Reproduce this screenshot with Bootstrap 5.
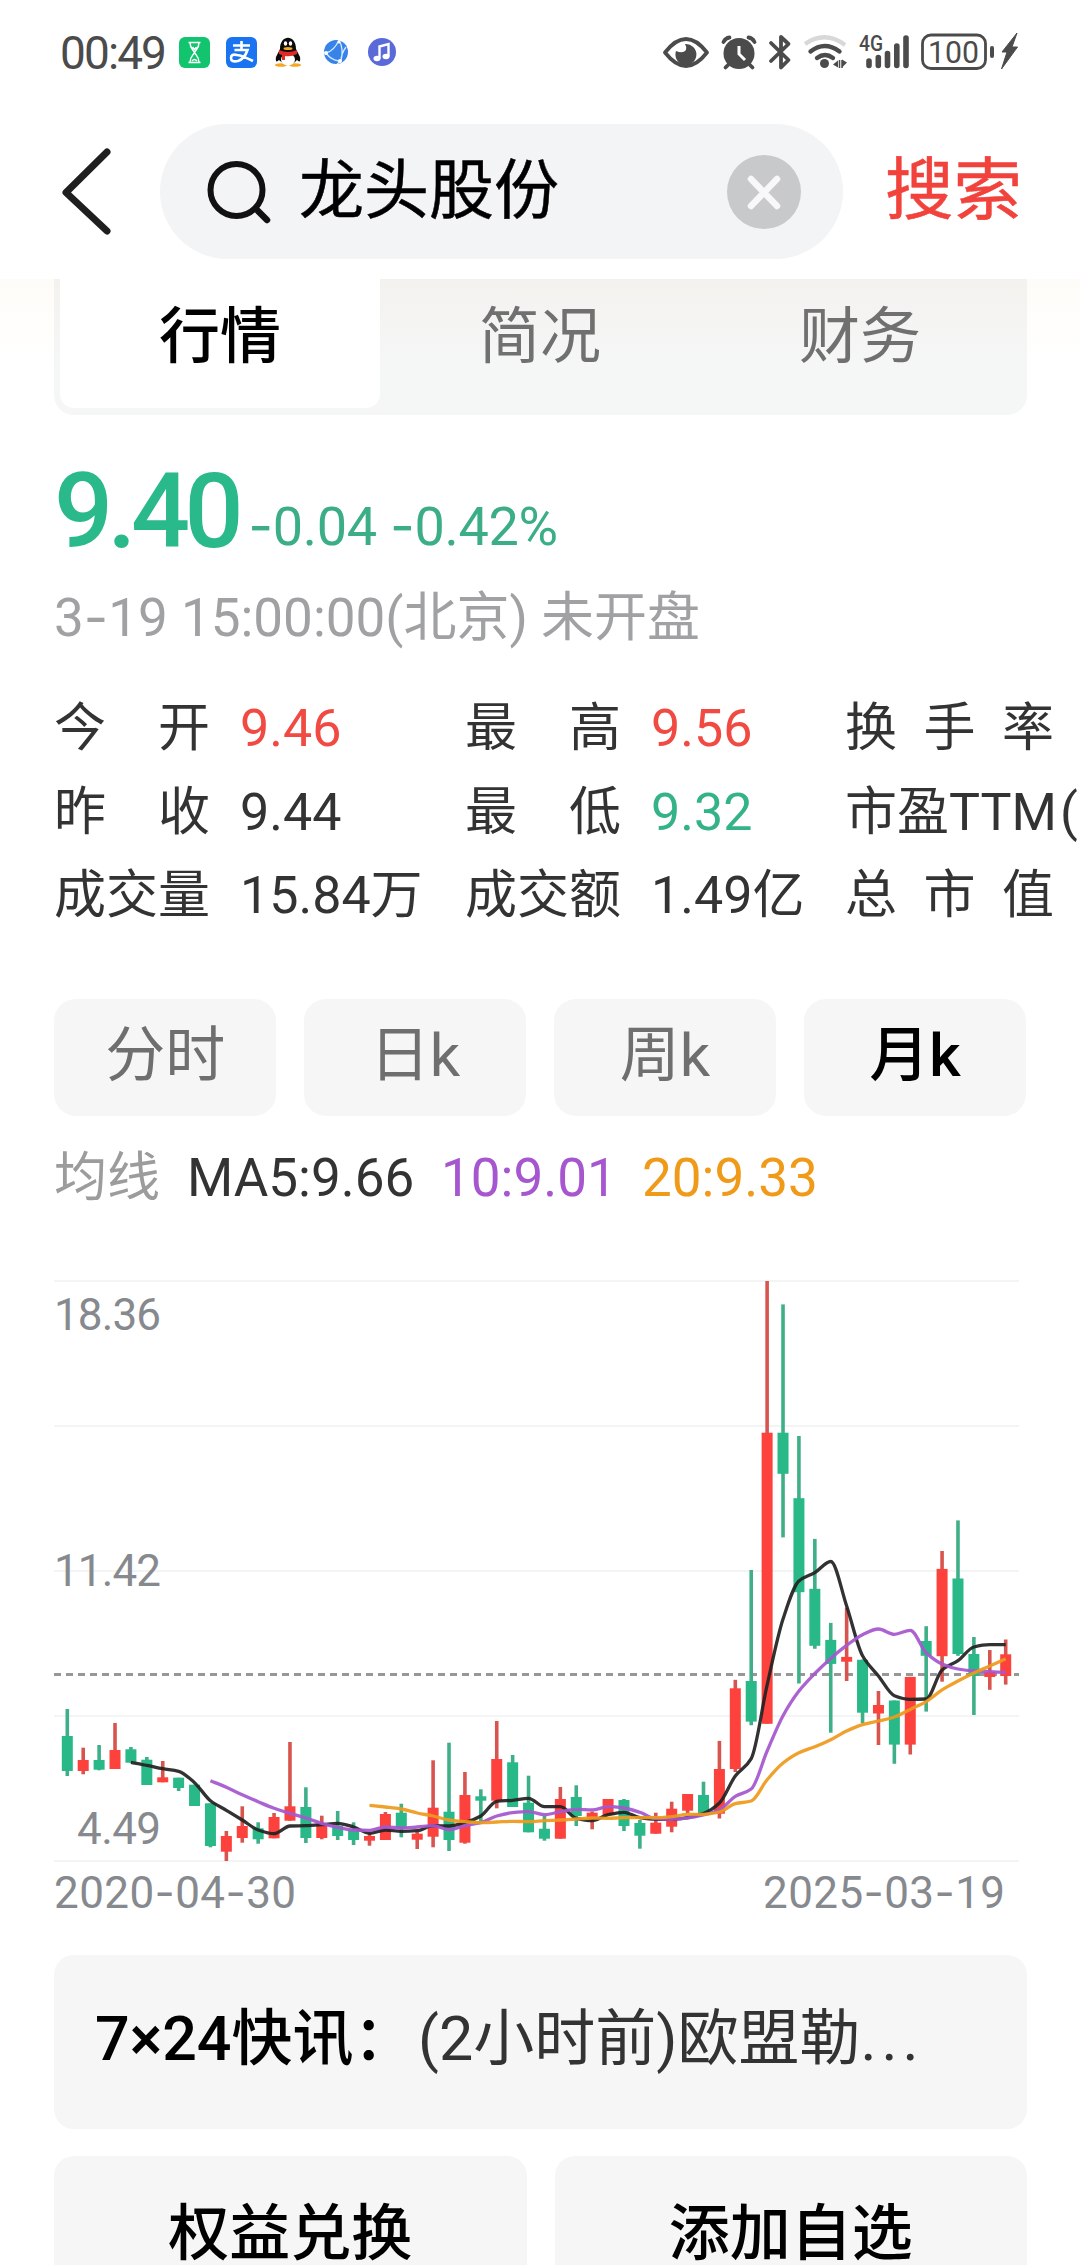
<!DOCTYPE html>
<html lang="zh-CN">
<head>
<meta charset="utf-8">
<meta name="viewport" content="width=device-width, initial-scale=1">
<title>龙头股份 行情</title>
<link href="https://cdn.jsdelivr.net/npm/bootstrap@5.3.0/dist/css/bootstrap.min.css" rel="stylesheet">
<style>
  body{font-family:Roboto,"Noto Sans CJK SC",sans-serif;width:1080px;height:2265px;overflow:hidden;background:#fff;color:#333;line-height:1}
  svg{display:block;flex:none}
  .statusbar{height:104px;padding:0 60px;color:#4b4b4b}
  .clock{font-size:46px;letter-spacing:-1.9px;width:107px;white-space:nowrap;padding-top:2px}
  .topbar{height:175px;padding:20px 0 0 62px}
  .searchbox{width:683px;height:135px;background:#f3f4f6;padding:0 42px 0 46px;margin-left:48px}
  .query{font-size:65px;color:#000;margin-left:28px;-webkit-text-stroke:.5px #000}
  .go{font-size:68.5px;color:#f2423c;margin-left:42px;white-space:nowrap;-webkit-text-stroke:.5px #f2423c}
  .tabzone{height:136px;padding:0 53px 0 54px;background:linear-gradient(#fefcf8,#fff 85px)}
  .tabset{height:136px;background:linear-gradient(#f4f2ef,#f5f6f6 80px);border-radius:0 0 20px 20px;padding:0 0 7px 6px;font-size:61px;color:#707070}
  .tabset>div{width:320px;padding-bottom:13px}
  .tabset .now{background:#fff;color:#000;font-weight:500;border-radius:0 0 14px 14px}
  .hy{font-family:Inter,sans-serif}
  .price{height:159px;padding:45px 54px 0;color:#2ab98a}
  .price b{font-size:104px;font-weight:500;letter-spacing:-5.5px;line-height:1}
  .price .chg{font-size:54px;letter-spacing:-.3px;color:#3bae87;margin-left:10px;position:relative;top:-2px}
  .stamp{height:94px;padding:17px 54px 0;font-size:53px;color:#9fa1a3;white-space:nowrap}
  .stats{padding:19px 0 0 54px;height:307px;font-size:52px;overflow:hidden}
  .stats>div{height:83.5px;line-height:83.5px;white-space:nowrap}
  .lab{width:156px;text-align:justify;text-align-last:justify;flex:none}
  .lab3{width:209px;text-align:justify;text-align-last:justify;flex:none;margin-right:6px}
  .v1{width:255px;padding-left:30px;flex:none}
  .v2{width:224px;padding-left:30px;flex:none}
  .up{color:#f04a43}.down{color:#35b388}
  .periods{padding:24px 54px 0;gap:27.6px}
  .periods .btn{height:117px;border-radius:22px;background:#f6f6f7;border:0;font-size:60px;line-height:1;color:#6f6f6f;padding:0 0 4px}
  .periods .btn.on{color:#000;font-weight:500}
  .malegend{height:114px;font-size:53px;padding:36px 0 0 54px;white-space:nowrap}
  .malegend span{flex:none}
  .news{height:174px;margin:0 53px 27px 54px;border-radius:20px;background:#f6f6f7;padding:0 40px 5px 41px;font-size:61px;color:#333;white-space:nowrap}
  .news strong{font-weight:500;color:#000;width:323px}
  .dots{letter-spacing:5px}
  .acts{gap:28px;padding:0 53px 0 54px}
  .acts>div{height:160px;border-radius:20px;background:#f6f6f7;font-size:61px;font-weight:500;color:#000;padding-bottom:4px}
</style>
</head>
<body>
<header>
  <div class="statusbar d-flex align-items-center">
    <span class="clock">00:49</span>
    <svg width="240" height="44" viewBox="167 30 240 44" style="margin-right:249px">
      <rect x="179" y="37" width="31" height="31" rx="6" fill="#12c46e"/>
      <path d="M188.500 42.500h12M188.500 62.500h12M190 42.500c0 6 3 7 4.500 10-1.500 3-4.500 4-4.500 10M199 42.500c0 6-3 7-4.500 10 1.500 3 4.500 4 4.500 10M192 61q2.500-3 5 0M192.500 47l2 2.500 2-2.500" fill="none" stroke="#fff" stroke-width="1.500"/>
      <rect x="226" y="37" width="31" height="31" rx="6" fill="#1a74f2"/>
      <path d="M233 45.500h17M241.500 41v9M234.500 50h13q-3 9-9.500 11-7 1.500-7-3t6-3q5 .5 16 6" fill="none" stroke="#fff" stroke-width="2.600"/>
      <ellipse cx="281" cy="65" rx="6" ry="1.800" fill="#f5a623"/><ellipse cx="295" cy="65" rx="6" ry="1.800" fill="#f5a623"/>
      <path d="M280 49c0-15 16-15 16 0l4 8q1 7-3 3-8 9-18 0-4 4-3-3z" fill="#0b0b0b"/>
      <ellipse cx="288" cy="59.500" rx="7" ry="6" fill="#fff"/>
      <path d="M279 50q9 4 18 0v4q-6 3-12 2v4h-3v-5l-3-1z" fill="#e02a25"/>
      <ellipse cx="285.500" cy="43.500" rx="1.700" ry="2.300" fill="#fff"/><ellipse cx="290.500" cy="43.500" rx="1.700" ry="2.300" fill="#fff"/>
      <ellipse cx="288" cy="48.500" rx="4.500" ry="1.500" fill="#f5a623"/>
      <circle cx="336" cy="52" r="12" fill="#3783ea"/>
      <path d="M326 53q8-2 13-13M326 53q5 7 13 8M339 40q5 9 2 21l-4 3M346 47q-5 7-5 14" fill="none" stroke="#d6e8ff" stroke-width="1.300"/>
      <circle cx="326" cy="53" r="2" fill="#fff"/><circle cx="340" cy="61" r="2" fill="#fff"/><circle cx="339" cy="42" r="1.500" fill="#fff"/>
      <circle cx="382" cy="52" r="14" fill="#5a6ad8"/>
      <path d="M379.500 58.500V46.500l9-2.500v12.500" fill="none" stroke="#fff" stroke-width="2.400"/>
      <ellipse cx="377" cy="58.500" rx="3.500" ry="2.800" fill="#fff"/><ellipse cx="386" cy="56.500" rx="3.500" ry="2.800" fill="#fff"/>
    </svg>
    <svg width="364" height="44" viewBox="656 30 364 44" fill="none" stroke="#4b4b4b">
      <path d="M665 52.500q21-27 42 0-21 27-42 0z" stroke-width="3.800" stroke-linejoin="round"/>
      <path d="M685 44a10.500 10.500 0 1 1-9 7q7 3 10-1 1-3-1-6z" fill="#4b4b4b" stroke="none"/>
      <circle cx="739" cy="53.500" r="15.500" fill="#4b4b4b" stroke="none"/>
      <path d="M723.500 42q2-4 6-4.500M754.500 42q-2-4-6-4.500M729 64l-3.500 3.500M749 64l3.500 3.500" stroke-width="3.800" stroke-linecap="round"/>
      <path d="M739 46v8l6 6" stroke="#fff" stroke-width="3"/>
      <path d="M771 43l17.500 17-7.500 7.500V37l7.500 7-17.500 17" stroke-width="3.800" stroke-linejoin="round" stroke-linecap="round"/>
      <path d="M805 44q20-14 40 1" stroke="#d8d8d8" stroke-width="4.200"/>
      <path d="M810.500 51.500q14-11 29 0M817 58q8-6 16 0" stroke-width="4.400" stroke-linecap="round"/>
      <circle cx="824.500" cy="63.500" r="4.500" fill="#4b4b4b" stroke="none"/>
      <path d="M833 64.500l5-4v7zM847 62.500l-5-3v8z" fill="#4b4b4b" stroke="none"/><path d="M839.500 60v8M842 60v8" stroke-width="1.500"/>
      <text x="859" y="51" font-size="22" font-weight="500" fill="#4b4b4b" stroke="none" textLength="24" lengthAdjust="spacingAndGlyphs">4G</text>
      <path d="M869 61v4.500M878.300 57.500v8M887.500 53.500v12M896.800 46v19.500M906 38v27.500" stroke-width="5.600" stroke-linecap="round"/>
      <rect x="922.500" y="35" width="63" height="33.500" rx="8.500" stroke-width="2.800"/>
      <text x="928" y="63" font-size="32" fill="#4b4b4b" stroke="none" textLength="51" lengthAdjust="spacingAndGlyphs">100</text>
      <path d="M992 48v8" stroke-width="4" stroke-linecap="round"/>
      <path d="M1017 33l-15 19h5l-5.500 17 16-22h-5.500z" fill="#4b4b4b" stroke="#4b4b4b" stroke-width="1"/>
    </svg>
  </div>
  <div class="topbar d-flex align-items-start">
    <div class="d-flex align-items-center">
      <svg width="50" height="92" viewBox="0 0 50 92"><path d="M45 6L4 46.500 45 85" fill="none" stroke="#1f1f1f" stroke-width="7" stroke-linecap="round" stroke-linejoin="round"/></svg>
      <div class="searchbox rounded-pill d-flex align-items-center">
        <svg width="65" height="65" viewBox="0 0 65 65"><circle cx="30.500" cy="31" r="26" fill="none" stroke="#111" stroke-width="6"/><path d="M51 51l10 10" stroke="#111" stroke-width="6.500" stroke-linecap="round"/></svg>
        <span class="query">龙头股份</span>
        <svg class="ms-auto" width="74" height="74" viewBox="0 0 74 74"><circle cx="37" cy="37" r="37" fill="#c8c9cb"/><path d="M24 24l26 27M50 24L24 51" stroke="#f8f8f8" stroke-width="6.500" stroke-linecap="round"/></svg>
      </div>
      <span class="go">搜索</span>
    </div>
  </div>
</header>
<main>
  <div class="tabzone">
    <nav class="tabset d-flex">
      <div class="now d-flex align-items-center justify-content-center">行情</div>
      <div class="d-flex align-items-center justify-content-center">简况</div>
      <div class="d-flex align-items-center justify-content-center">财务</div>
    </nav>
  </div>
  <div class="price d-flex align-items-baseline"><b>9.40</b><span class="chg"><span class="hy">-</span>0.04 <span class="hy">-</span>0.42%</span></div>
  <div class="stamp">3<span class="hy">-</span>19 15:00:00(北京) 未开盘</div>
  <section class="stats">
    <div class="d-flex"><span class="lab">今 开</span><span class="v1 up">9.46</span><span class="lab">最 高</span><span class="v2 up">9.56</span><span class="lab3">换 手 率</span></div>
    <div class="d-flex"><span class="lab">昨 收</span><span class="v1">9.44</span><span class="lab">最 低</span><span class="v2 down">9.32</span><span class="lab3">市盈TTM</span><span>(</span></div>
    <div class="d-flex"><span class="lab">成交量</span><span class="v1">15.84万</span><span class="lab">成交额</span><span class="v2">1.49亿</span><span class="lab3">总 市 值</span></div>
  </section>
  <div class="periods d-flex">
    <button class="btn flex-fill w-25">分时</button><button class="btn flex-fill w-25">日k</button><button class="btn flex-fill w-25">周k</button><button class="btn on flex-fill w-25">月k</button>
  </div>
  <div class="malegend d-flex">
    <span style="width:133px;color:#9c9c9c">均线</span><span style="width:254px">MA5:9.66</span><span style="width:201px;color:#a657cf">10:9.01</span><span style="color:#f09a19">20:9.33</span>
  </div>
  <svg id="chart" width="1080" height="725" viewBox="0 -51 1080 725"></svg>
  <div class="news d-flex align-items-center"><strong>7×24快讯：</strong><span>(2小时前)欧盟勒<span class="dots">...</span></span></div>
  <div class="acts d-flex">
    <div class="w-50 d-flex align-items-center justify-content-center">权益兑换</div>
    <div class="w-50 d-flex align-items-center justify-content-center">添加自选</div>
  </div>
</main>
<script>
// Monthly candles: [rising, high, body top, body bottom, low], in chart units below the 18.36 gridline.
const candles=[[0,428,455,490,495],[1,466.7,479,490,493.3],[0,464,479,488.7,489.3],[1,442,469,488,488],[0,466,468.3,481.7,481.7],[0,476,478.7,504,504],[1,480,496.3,501.3,501.3],[0,496.7,496.7,507,510],[0,503.7,503.7,525,525],[0,522.3,522.3,565,566.3],
[1,550,555,570.7,580],[1,525.3,545,557,561.7],[0,541.3,547.3,558.3,562.7],[1,532,536,557.3,557.3],[1,461,525.3,539.7,539.7],[0,506.3,526,557,562],[1,534.7,542.3,557,558.3],[0,530,544.7,555,559],[0,541.3,549,559,564],[1,552.3,555,559.7,564.7],
[1,531,533,559,559],[0,522.7,531.7,547.3,556.3],[1,550.7,552.7,558.7,568],[1,479.3,526.7,555.7,566.3],[0,461.7,530.7,559,570],[1,491,514,561.7,562.7],[0,508.3,515.3,519.7,540],[1,440,478,519.7,527.3],[0,474,481.3,526,526],[0,494.7,521.7,551.3,551.3],
[0,535,547.7,557.7,559.7],[1,506,518,557.7,557.7],[0,504.3,516,535,545],[1,530.7,531.7,538.3,548.3],[1,518,518,534,534],[0,518,519,545,550],[0,539,542,554.7,567.7],[1,531.7,541.7,552.7,552.7],[1,520.7,527.7,545.7,551.3],[1,513,513,529.7,532.3],
[0,500.7,514,532,532],[1,459.9,488,532.7,537.5],[1,398.8,407.3,488,491],[0,289,400,440.6,444.3],[1,0,151.7,442.8,442.8],[0,23.4,151.7,192.8,256.4],[0,155,217.2,311.2,402.5],[0,257.9,307.8,364.8,367.8],[0,341.9,358.9,382.9,451.7],[1,326.7,375.9,380.7,400],
[0,378.5,378.8,431.7,442],[1,410,424,432.5,464],[0,419.5,419.5,463.6,482.8],[1,395.9,395.9,463.6,473.5],[0,345.2,360,374.8,430.6],[1,270,287.9,375.2,400.7],[0,239.4,297.5,373,374.8],[0,356,373,395,434],[1,369,391,396,408.8],[1,358.5,373.3,395,403.6]];
const averages=[
 {from:4,color:'#222',y:[481.3,484.3,487.7,490.3,501.7,519.7,529.3,539,549,552.7,545,544.7,543.7,542.3,546,552.3,549,550.3,549.7,544.7,545,541.7,535,520.3,519.3,517.3,525.7,525.7,537.3,539.7,533.7,531.3,536.7,538.3,538.3,536.5,532.5,522,495,477.6,404,338,300,291.6,280.5,325,374.8,395,414.7,418.4,418,389,379.6,366,363.7,363.7]},
 {from:9,color:'#a657cf',y:[499.7,506.3,513.7,520.7,527.3,532.3,537,542.3,546.3,549,549.3,546,547,546,544.7,548.7,544.7,541.7,535,531.7,530.7,533.7,530.7,528.3,529,525.7,527,531.3,537.7,538.3,537,534,529,515.3,508,470,434.7,410,392.5,377.4,364.4,353.7,348,353.3,349.3,371.8,383,388,390,390.7,391.4]},
 {from:19,color:'#ee9a1c',y:[524.3,526,528,532,535,539,540.7,541.7,541,540.3,540.7,539.7,539,538,537,537.3,536.7,536.7,536.7,535.7,533.3,533.3,531,522.7,520,498.7,482,471.7,465.8,458.7,449.9,443.6,440,436,428.4,420.6,408.8,400,392,385,377.7]}];
const step=15.905,x=i=>67.3+step*i;
let out='';
for(const g of [0,145,290,435,580]) out+=`<path d="M54 ${g}H1019" stroke="#f4f4f5" stroke-width="2"/>`;
out+='<path d="M54 393.500H1019" stroke="#979797" stroke-width="3" stroke-dasharray="7 5"/>';
const label=(lx,ly,w,t)=>`<text x="${lx}" y="${ly}" font-size="44" fill="#86898e" textLength="${w}">${t.replace(/-/g,'<tspan class="hy">-</tspan>')}</text>`;
out+=label(54,49,107,'18.36')+label(54,305,107,'11.42')+label(77,563,84,'4.49')+label(54,627,242,'2020-04-30')+label(763,627,242,'2025-03-19');
candles.forEach(([r,h,t,b,l],i)=>{
  const c=r?'#fd413c':'#29b989',w=r?'#d8544e':'#3faf88';
  out+=`<path d="M${x(i)} ${h}V${l}" stroke="${w}" stroke-width="3.600"/><rect x="${x(i)-5.5}" y="${t}" width="11" height="${b-t}" fill="${c}"/>`;
});
// Monotone cubic curve, so that the averages never overshoot their points.
for(const a of averages){
  const y=a.y,n=y.length,d=y.slice(1).map((v,i)=>v-y[i]);
  const m=y.map((_,i)=>i===0?d[0]:i===n-1?d[n-2]:d[i-1]*d[i]<=0?0:2*d[i-1]*d[i]/(d[i-1]+d[i]));
  let p=`M${x(a.from)} ${y[0]}`;
  for(let i=1;i<n;i++){const x0=x(a.from+i-1),x1=x(a.from+i);
    p+=`C${x0+step/3} ${y[i-1]+m[i-1]/3} ${x1-step/3} ${y[i]-m[i]/3} ${x1} ${y[i]}`;}
  out+=`<path d="${p}" fill="none" stroke="${a.color}" stroke-width="3.300" stroke-opacity=".93"/>`;
}
document.getElementById('chart').innerHTML=out;
</script>
<script src="https://cdn.jsdelivr.net/npm/bootstrap@5.3.0/dist/js/bootstrap.bundle.min.js"></script>
</body>
</html>
